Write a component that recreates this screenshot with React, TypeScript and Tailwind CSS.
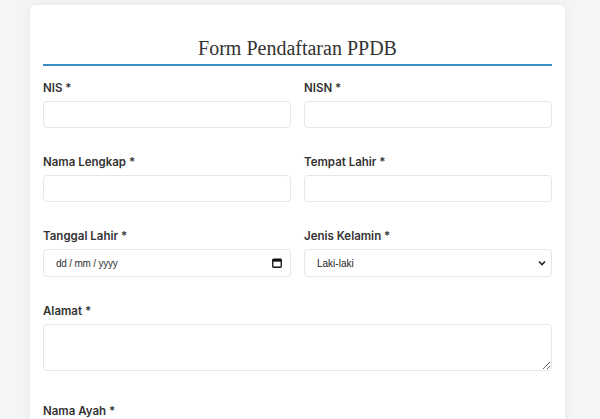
import React from 'react'

const labelCls = 'block mb-[6px] text-[11.5px] leading-[14px] font-semibold text-[#333] font-["Inter",sans-serif]'
const inputCls = 'block w-full h-[27px] rounded-[4px] border border-[#e6e6e6] bg-white px-[12px] text-[10px] text-[#222] font-["Liberation_Sans",Arial,sans-serif] outline-none'

function Field({ label, children }: { label: string; children: React.ReactNode }) {
  return (
    <div className="mb-[27px]">
      <label className={labelCls}>{label}</label>
      {children}
    </div>
  )
}

function CalendarIcon() {
  return (
    <svg width="10" height="10" viewBox="0 0 10 10" className="pointer-events-none absolute right-[9px] top-[8.5px]">
      <rect x="0.75" y="1.25" width="8.5" height="8" rx="0.8" fill="none" stroke="#111" strokeWidth="1.3" />
      <rect x="0.75" y="1.25" width="8.5" height="2.4" fill="#111" />
    </svg>
  )
}

function Chevron() {
  return (
    <svg width="8" height="6" viewBox="0 0 8 6" className="pointer-events-none absolute right-[6px] top-[11px]">
      <path d="M1 1.5 L4 4.5 L7 1.5" fill="none" stroke="#222" strokeWidth="1.6" />
    </svg>
  )
}

export default function App() {
  return (
    <div className="min-h-[419px] bg-[#f5f5f5] pt-[5px]">
      <div className="ml-[30px] w-[535px] rounded-t-[6px] bg-white px-[13px] pt-[29px] pb-[20px] shadow-[0_0_12px_rgba(0,0,0,0.06)]">
        <h2 className='border-b-2 border-[#3a8dc5] pb-[2px] text-center text-[20px] leading-[28px] text-[#333] font-["Liberation_Serif","Times_New_Roman",serif]'>
          Form Pendaftaran PPDB
        </h2>

        <div className="mt-[15px] grid grid-cols-2 gap-x-[13px]">
          <Field label="NIS *">
            <input type="text" className={inputCls} />
          </Field>
          <Field label="NISN *">
            <input type="text" className={inputCls} />
          </Field>
          <Field label="Nama Lengkap *">
            <input type="text" className={inputCls} />
          </Field>
          <Field label="Tempat Lahir *">
            <input type="text" className={inputCls} />
          </Field>
          <Field label="Tanggal Lahir *">
            <div className="relative">
              <input
                type="text"
                placeholder="dd / mm / yyyy"
                className={inputCls + ' h-[28px] placeholder:text-[#333] tracking-[-0.2px]'}
              />
              <CalendarIcon />
            </div>
          </Field>
          <Field label="Jenis Kelamin *">
            <div className="relative">
              <select className={inputCls + ' h-[28px] appearance-none'} defaultValue="L">
                <option value="L">Laki-laki</option>
                <option value="P">Perempuan</option>
              </select>
              <Chevron />
            </div>
          </Field>
        </div>

        <div className="mb-[33px]">
          <label className={labelCls}>Alamat *</label>
          <textarea className="block h-[47px] w-full rounded-[4px] border border-[#e6e6e6] bg-white px-[8px] py-[6px] text-[10px] outline-none" />
        </div>

        <div>
          <label className={labelCls}>Nama Ayah *</label>
          <input type="text" className={inputCls} />
        </div>
      </div>
    </div>
  )
}
